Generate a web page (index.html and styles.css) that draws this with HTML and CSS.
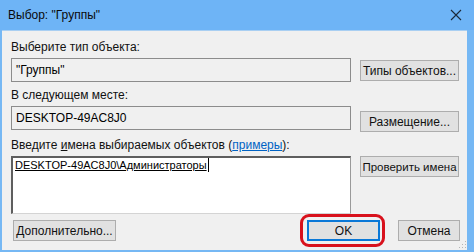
FILE: index.html
```html
<!DOCTYPE html>
<html lang="ru">
<head>
    <meta charset="UTF-8">
    <title>Выбор: "Группы"</title>
    <link rel="stylesheet" href="styles.css">
</head>
<body>
    <div class="window">
        <div class="titlebar">
            <span class="title">Выбор: "Группы"</span>
            <svg class="close" width="12" height="12" viewBox="0 0 12 12">
                <path d="M1 1 L11 11 M11 1 L1 11" stroke="#1b2a3a" stroke-width="1.1" fill="none"/>
            </svg>
        </div>

        <div class="dialog">
            <div class="label">Выберите тип объекта:</div>
            <div class="row">
                <div class="field">"Группы"</div>
                <button class="btn side">Типы объектов...</button>
            </div>

            <div class="label">В следующем месте:</div>
            <div class="row">
                <div class="field">DESKTOP-49AC8J0</div>
                <button class="btn side low">Размещение...</button>
            </div>

            <div class="label">Введите <u>и</u>мена выбираемых объектов (<a href="#">примеры</a>):</div>
            <div class="row">
                <div class="names"><span class="resolved">DESKTOP-49AC8J0\Администраторы</span><span class="caret"></span></div>
                <button class="btn side top">Проверить имена</button>
            </div>

            <div class="footer">
                <button class="btn more">Дополнительно...</button>
                <div class="spacer"></div>
                <div class="ok-wrap">
                    <button class="btn ok">OK</button>
                </div>
                <button class="btn cancel">Отмена</button>
            </div>

            <svg class="grip" width="8" height="8" viewBox="0 0 8 8">
                <rect x="6" y="0" width="1" height="1" fill="#b5b5b5"/>
                <rect x="3" y="3" width="1" height="1" fill="#b5b5b5"/>
                <rect x="6" y="3" width="1" height="1" fill="#b5b5b5"/>
                <rect x="0" y="6" width="1" height="1" fill="#b5b5b5"/>
                <rect x="3" y="6" width="1" height="1" fill="#b5b5b5"/>
                <rect x="6" y="6" width="1" height="1" fill="#b5b5b5"/>
            </svg>
        </div>
    </div>
</body>
</html>
```

FILE: styles.css
```css
* {
    box-sizing: border-box;
}
body {
    margin: 0;
    font-family: "Liberation Sans", Arial, sans-serif;
    font-size: 12px;
    color: #000;
    background: #6fb5f5;
}
.window {
    width: 474px;
    height: 252px;
    display: flex;
    flex-direction: column;
    background: #76b8f4;
}
.titlebar {
    height: 30px;
    display: flex;
    align-items: center;
    justify-content: space-between;
    padding: 0 12px 0 8px;
    background: #6eb4f6;
}
.title {
    font-size: 12px;
    color: #0a0a0a;
}
.close {
    margin-top: -1px;
}
.dialog {
    position: relative;
    flex: 1;
    margin: 0 7px 2px 2px;
    padding: 9px 8px 0 9px;
    background: #f0f0f0;
    border-top: 1px solid #a9cff2;
}
.label {
    height: 15px;
    line-height: 15px;
    margin-bottom: 3px;
    color: #111;
    white-space: nowrap;
}
.label a {
    color: #0063c4;
}
.row {
    display: flex;
    align-items: flex-start;
    gap: 9px;
    margin-bottom: 6px;
}
.field {
    width: 340px;
    height: 24px;
    line-height: 22px;
    padding: 0 4px;
    border: 1px solid #8c8c8c;
    background: #f0f0f0;
}
.btn {
    height: 21px;
    padding: 0;
    font-family: inherit;
    font-size: 12px;
    color: #111;
    white-space: nowrap;
    background: #e1e1e1;
    border: 1px solid #adadad;
    border-radius: 0;
}
.side {
    width: 99px;
    margin-top: 2px;
}
.side.low {
    margin-top: 5px;
}
.side.top {
    margin-top: 0;
    font-size: 11.5px;
}
.names {
    width: 340px;
    height: 58px;
    padding: 0 0 0 2px;
    background: #fff;
    border-top: 2px solid #5e5e5e;
    border-left: 2px solid #5e5e5e;
    border-right: 1px solid #9a9a9a;
    border-bottom: 1px solid #d4d4d4;
    font-size: 11px;
    line-height: 15px;
}
.resolved {
    text-decoration: underline;
    text-decoration-thickness: 1px;
}
.caret {
    display: inline-block;
    width: 1px;
    height: 14px;
    margin-left: 1px;
    vertical-align: -3px;
    background: #000;
}
.footer {
    display: flex;
    align-items: center;
    margin-top: 4px;
    padding-left: 2px;
}
.spacer {
    flex: 1;
}
.more {
    width: 103px;
}
.ok-wrap {
    position: relative;
}
.ok-wrap::after {
    content: "";
    position: absolute;
    left: -7px;
    right: -5px;
    top: -6px;
    bottom: -6px;
    border: 3px solid #d8111c;
    border-radius: 9px;
}
.ok {
    width: 73px;
    border: 2px solid #0a78d7;
}
.cancel {
    width: 62px;
    margin-left: 18px;
    margin-right: -1px;
}
.grip {
    position: absolute;
    right: 0;
    bottom: 1px;
}
```
